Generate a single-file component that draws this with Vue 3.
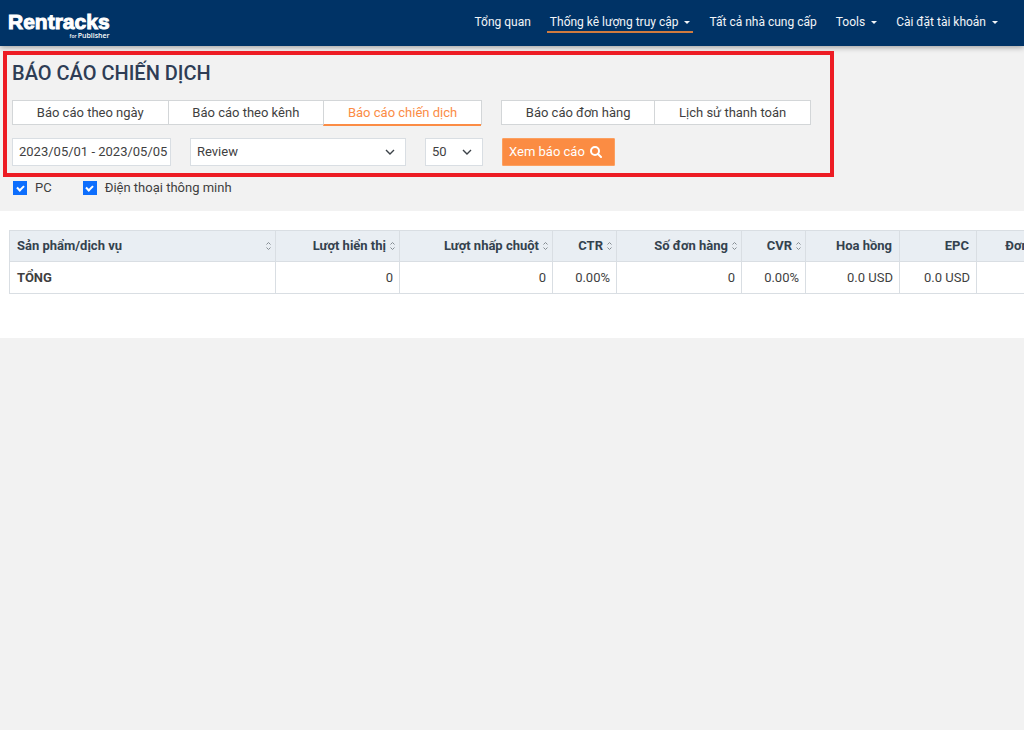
<script setup>
import { ref } from 'vue'

const menu = [
  { label: 'Tổng quan' },
  { label: 'Thống kê lượng truy cập', caret: true, active: true },
  { label: 'Tất cả nhà cung cấp' },
  { label: 'Tools', caret: true },
  { label: 'Cài đặt tài khoản', caret: true },
]
const reportTabs = [
  { label: 'Báo cáo theo ngày' },
  { label: 'Báo cáo theo kênh' },
  { label: 'Báo cáo chiến dịch', active: true },
]
const orderTabs = [{ label: 'Báo cáo đơn hàng' }, { label: 'Lịch sử thanh toán' }]
const columns = [
  { key: 'product', label: 'Sản phẩm/dịch vụ', sort: true, total: 'TỔNG' },
  { key: 'views', label: 'Lượt hiển thị', sort: true, total: '0' },
  { key: 'clicks', label: 'Lượt nhấp chuột', sort: true, total: '0' },
  { key: 'ctr', label: 'CTR', sort: true, total: '0.00%' },
  { key: 'orders', label: 'Số đơn hàng', sort: true, total: '0' },
  { key: 'cvr', label: 'CVR', sort: true, total: '0.00%' },
  { key: 'commission', label: 'Hoa hồng', total: '0.0 USD' },
  { key: 'epc', label: 'EPC', total: '0.0 USD' },
  { key: 'approved', label: 'Đơn hàng', total: '' },
]
const range = ref('2023/05/01 - 2023/05/05')
const campaign = ref('Review')
const size = ref('50')
const pc = ref(true)
const phone = ref(true)
</script>

<template>
  <header class="topbar">
    <a class="brand" href="#" aria-label="Rentracks for Publisher">
      <span class="brand-name">Rentracks</span>
      <span class="brand-sub"><small>for</small><span>Publisher</span></span>
    </a>
    <nav class="menu">
      <a v-for="m in menu" :key="m.label" href="#" :class="{ active: m.active }">
        {{ m.label }}<i v-if="m.caret" class="caret"></i>
      </a>
    </nav>
  </header>

  <main>
    <section class="panel">
      <div class="highlight"></div>
      <h1>BÁO CÁO CHIẾN DỊCH</h1>
      <div class="tab-row">
        <div class="tabs reports">
          <a v-for="t in reportTabs" :key="t.label" href="#" :class="{ active: t.active }">{{ t.label }}</a>
        </div>
        <div class="tabs orders">
          <a v-for="t in orderTabs" :key="t.label" href="#">{{ t.label }}</a>
        </div>
      </div>
      <form class="filters" @submit.prevent>
        <input v-model="range" class="field range" type="text" aria-label="Khoảng thời gian" />
        <span class="select campaign">
          <select v-model="campaign" class="field" aria-label="Chiến dịch">
            <option>Review</option>
          </select>
          <svg viewBox="0 0 10 6"><path d="M1 1l4 4 4-4" /></svg>
        </span>
        <span class="select size">
          <select v-model="size" class="field" aria-label="Số dòng">
            <option>50</option>
          </select>
          <svg viewBox="0 0 10 6"><path d="M1 1l4 4 4-4" /></svg>
        </span>
        <button class="submit" type="submit">
          Xem báo cáo
          <svg viewBox="0 0 12 12"><circle cx="5" cy="5" r="4" /><path d="M8 8l3 3" /></svg>
        </button>
      </form>
      <div class="devices">
        <label><input v-model="pc" type="checkbox" />PC</label>
        <label><input v-model="phone" type="checkbox" />Điện thoại thông minh</label>
      </div>
    </section>

    <section class="results">
      <table>
        <colgroup>
          <col v-for="c in columns" :key="c.key" :class="c.key" />
        </colgroup>
        <thead>
          <tr>
            <th v-for="c in columns" :key="c.key" scope="col">
              <div class="head">
                {{ c.label }}
                <svg v-if="c.sort" viewBox="0 0 5 8"><path d="M.5 2.5l2-2 2 2M.5 5.5l2 2 2-2" /></svg>
              </div>
            </th>
          </tr>
        </thead>
        <tbody>
          <tr>
            <td v-for="c in columns" :key="c.key">{{ c.total }}</td>
          </tr>
        </tbody>
      </table>
    </section>
  </main>
</template>

<style>
body {
  background: #f2f2f2;
}
</style>

<style scoped>
.topbar,
main {
  font-family: Roboto, "Noto Sans", sans-serif;
  font-size: 13px;
  line-height: 18px;
  color: #3f3f3f;
}
a {
  color: inherit;
  text-decoration: none;
}
input,
select,
button {
  font: inherit;
  color: inherit;
  margin: 0;
  box-sizing: border-box;
}
.topbar {
  display: flex;
  justify-content: space-between;
  align-items: center;
  height: 46px;
  box-sizing: border-box;
  padding: 0 23px 0 8px;
  background: #003366;
  color: #f2f5f8;
  position: relative;
  box-shadow: 0 1px 6px rgba(0, 0, 0, 0.4);
}
.brand {
  display: flex;
  flex-direction: column;
  align-items: flex-end;
  padding-top: 6px;
  color: #fff;
}
.brand-name {
  font: 700 21px/20px "Liberation Sans", Arial, sans-serif;
  -webkit-text-stroke: 1px #fff;
}
.brand-sub {
  display: flex;
  align-items: baseline;
  gap: 1px;
  font: 600 7px/8px "Open Sans", sans-serif;
}
.brand-sub small {
  font-size: 5px;
}
.menu {
  display: flex;
  gap: 13px;
  font-size: 12px;
}
.menu a {
  display: flex;
  align-items: center;
  gap: 6px;
  padding: 0 3px;
  border-bottom: 2px solid transparent;
}
.menu a.active {
  border-bottom-color: #d07b3f;
}
.caret {
  border: 3px solid transparent;
  border-top-color: currentColor;
  border-bottom: 0;
}
.panel {
  position: relative;
  padding: 14px 12px;
}
.highlight {
  position: absolute;
  top: 5px;
  left: 3px;
  width: 831px;
  height: 126px;
  box-sizing: border-box;
  border: 4px solid #ed1c24;
  pointer-events: none;
}
h1 {
  margin: 0 0 14px;
  font-size: 20px;
  line-height: 26px;
  font-weight: 500;
  color: #2e3d55;
}
.tab-row {
  display: flex;
  gap: 19px;
}
.tabs {
  display: flex;
  height: 25px;
  box-sizing: border-box;
  border: 1px solid #d3d6d8;
  background: #fff;
}
.tabs.reports {
  width: 470px;
}
.tabs.orders {
  width: 310px;
}
.tabs a {
  flex: 1 0 auto;
  text-align: center;
  line-height: 23px;
}
.tabs a + a {
  border-left: 1px solid #d3d6d8;
}
.tabs a.active {
  height: 23px;
  color: #fb8c45;
  border-bottom: 2px solid #fb8c45;
}
.filters {
  display: flex;
  gap: 19px;
  margin-top: 13px;
}
.field {
  height: 28px;
  width: 100%;
  padding: 0 6px;
  border: 1px solid #d9dee3;
  border-radius: 0;
  background: #fff;
  appearance: none;
}
.range {
  width: 159px;
  padding: 0 0 2px 6px;
}
.select {
  display: grid;
  align-items: center;
}
.select > * {
  grid-area: 1 / 1;
}
.select svg {
  justify-self: end;
  width: 10px;
  height: 6px;
  margin-right: 11px;
  pointer-events: none;
  fill: none;
  stroke: #3c4248;
  stroke-width: 1.4;
}
.campaign {
  width: 216px;
}
.size {
  width: 58px;
}
.submit {
  display: flex;
  align-items: center;
  gap: 5px;
  width: 113px;
  height: 28px;
  padding: 0 6px;
  border: 1px solid #fca060;
  border-radius: 1px;
  background: #fb8c43;
  color: #fff;
}
.submit svg {
  width: 12px;
  height: 12px;
  fill: none;
  stroke: #fff;
  stroke-width: 2;
  stroke-linecap: round;
}
.devices {
  display: flex;
  gap: 31px;
  margin-top: 13px;
  padding-left: 1px;
}
.devices label {
  display: flex;
  align-items: center;
  gap: 8px;
}
.devices input {
  appearance: none;
  display: grid;
  place-items: center;
  width: 14px;
  height: 14px;
  background: #0d6efd;
}
.devices input:not(:checked) {
  background: #fff;
  border: 1px solid #b5babf;
}
.devices input:checked::before {
  content: "";
  width: 7px;
  height: 5px;
  box-sizing: border-box;
  border: solid #fff;
  border-width: 0 0 2px 2px;
  transform: translateY(-1px) rotate(-45deg);
}
.results {
  padding: 19px 0 44px 9px;
  background: #fff;
  overflow: hidden;
}
table {
  width: 1060px;
  table-layout: fixed;
  border-collapse: collapse;
}
.product {
  width: 266px;
}
.views {
  width: 124px;
}
.clicks {
  width: 153px;
}
.ctr,
.cvr {
  width: 64px;
}
.orders {
  width: 125px;
}
.commission {
  width: 94px;
}
.epc {
  width: 77px;
}
th,
td {
  height: 32px;
  box-sizing: border-box;
  padding: 0 6px;
  border: 1px solid #d9dee3;
  text-align: right;
  white-space: nowrap;
}
th {
  height: 31px;
  background: #e9eef3;
  padding-right: 4px;
  color: #34424e;
  font-weight: 700;
}
th:nth-child(n + 7) {
  padding-right: 7px;
}
th:first-child,
td:first-child {
  padding-left: 7px;
  text-align: left;
}
td:first-child {
  font-weight: 700;
}
.head {
  display: flex;
  align-items: center;
  justify-content: flex-end;
  gap: 4px;
}
th:first-child .head {
  justify-content: space-between;
}
.head svg {
  width: 5px;
  height: 8px;
  fill: none;
  stroke: #858c92;
  stroke-width: 1;
}
</style>
